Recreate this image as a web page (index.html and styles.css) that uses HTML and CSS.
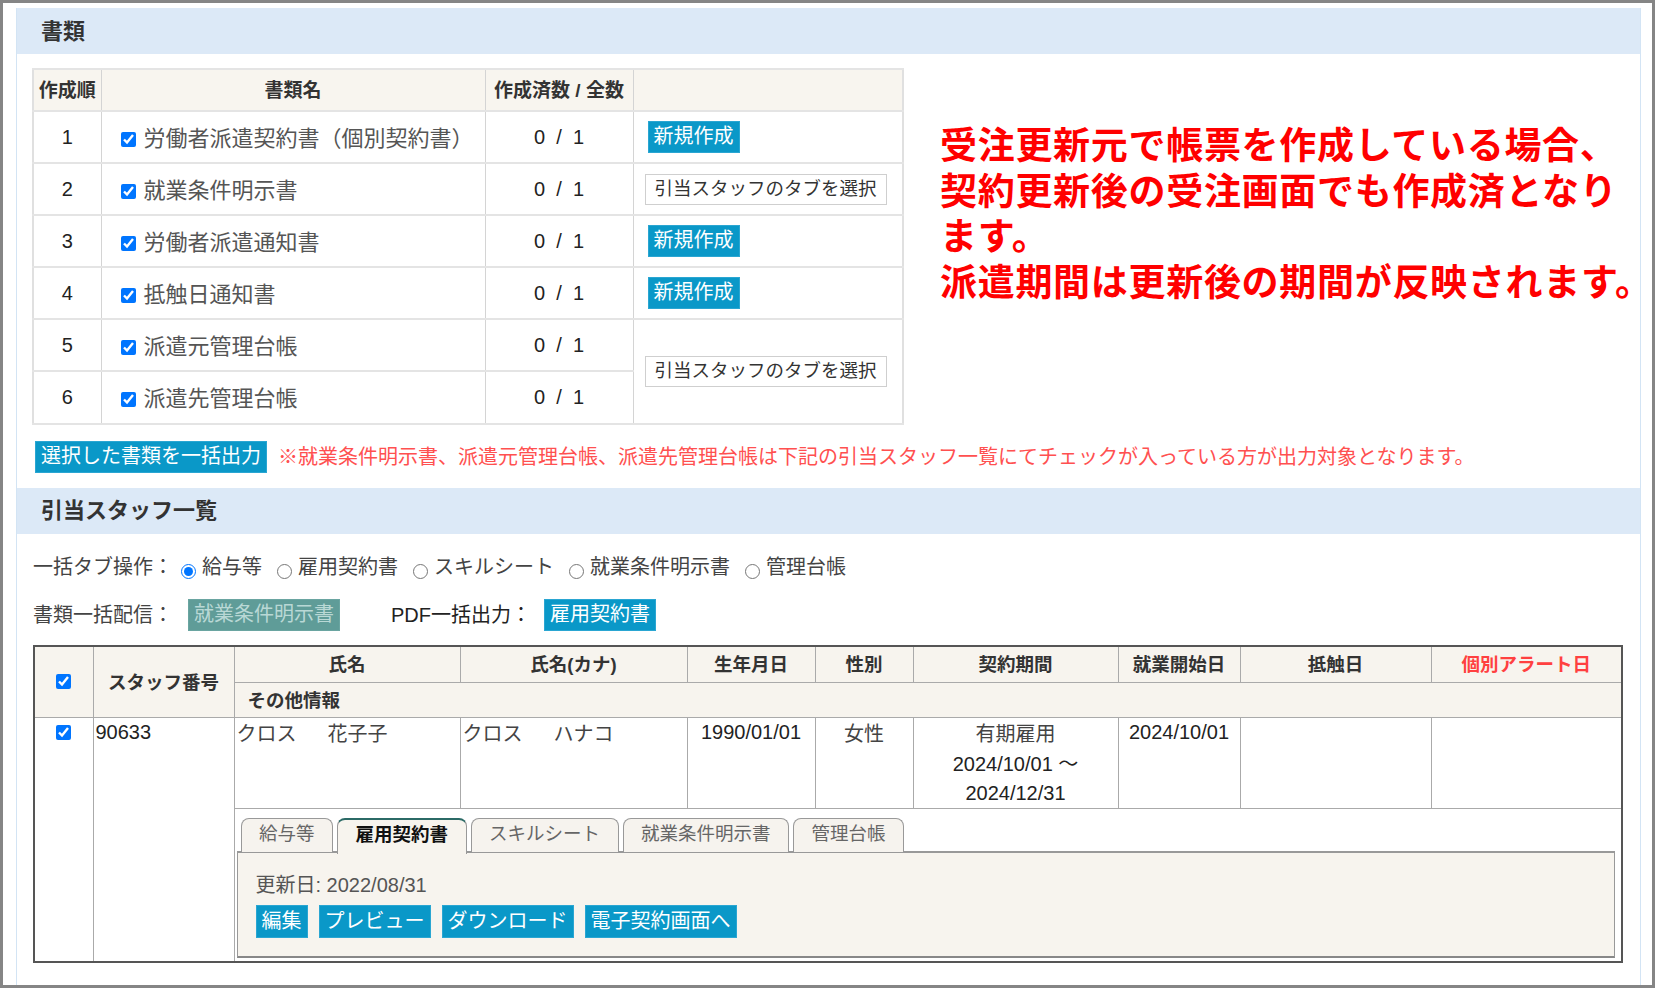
FILE: index.html
```html
<!DOCTYPE html>
<html lang="ja">
<head>
<meta charset="utf-8">
<title>書類 / 引当スタッフ一覧</title>
<link rel="stylesheet" href="styles.css">
</head>
<body>
<div class="frame">
  <div class="panel">
    <div class="band">書類</div>

    <div class="docs">
      <table class="doc-table">
        <colgroup>
          <col class="c-order"><col class="c-name"><col class="c-count"><col class="c-act">
        </colgroup>
        <thead>
          <tr><th>作成順</th><th>書類名</th><th>作成済数 / 全数</th><th></th></tr>
        </thead>
        <tbody>
          <tr>
            <td class="num">1</td>
            <td class="doc"><input type="checkbox" checked>労働者派遣契約書（個別契約書）</td>
            <td class="num">0 &nbsp;/ &nbsp;1</td>
            <td class="act"><span class="btn btn-new">新規作成</span></td>
          </tr>
          <tr>
            <td class="num">2</td>
            <td class="doc"><input type="checkbox" checked>就業条件明示書</td>
            <td class="num">0 &nbsp;/ &nbsp;1</td>
            <td class="act"><span class="btn-plain">引当スタッフのタブを選択</span></td>
          </tr>
          <tr>
            <td class="num">3</td>
            <td class="doc"><input type="checkbox" checked>労働者派遣通知書</td>
            <td class="num">0 &nbsp;/ &nbsp;1</td>
            <td class="act"><span class="btn btn-new">新規作成</span></td>
          </tr>
          <tr>
            <td class="num">4</td>
            <td class="doc"><input type="checkbox" checked>抵触日通知書</td>
            <td class="num">0 &nbsp;/ &nbsp;1</td>
            <td class="act"><span class="btn btn-new">新規作成</span></td>
          </tr>
          <tr>
            <td class="num">5</td>
            <td class="doc"><input type="checkbox" checked>派遣元管理台帳</td>
            <td class="num">0 &nbsp;/ &nbsp;1</td>
            <td class="act" rowspan="2"><span class="btn-plain">引当スタッフのタブを選択</span></td>
          </tr>
          <tr>
            <td class="num">6</td>
            <td class="doc"><input type="checkbox" checked>派遣先管理台帳</td>
            <td class="num">0 &nbsp;/ &nbsp;1</td>
          </tr>
        </tbody>
      </table>

      <p class="note">受注更新元で帳票を作成している場合、<br>契約更新後の受注画面でも作成済となり<br>ます。<br>派遣期間は更新後の期間が反映されます。</p>
    </div>

    <div class="bulk">
      <span class="btn">選択した書類を一括出力</span>
      <span class="warn">※就業条件明示書、派遣元管理台帳、派遣先管理台帳は下記の引当スタッフ一覧にてチェックが入っている方が出力対象となります。</span>
    </div>

    <div class="band">引当スタッフ一覧</div>

    <div class="opt-row">
      <span class="lbl">一括タブ操作：</span><label class="opt"><input type="radio" name="tab" checked>給与等</label><label class="opt"><input type="radio" name="tab">雇用契約書</label><label class="opt"><input type="radio" name="tab">スキルシート</label><label class="opt"><input type="radio" name="tab">就業条件明示書</label><label class="opt"><input type="radio" name="tab">管理台帳</label>
    </div>

    <div class="dist-row">
      <span class="lbl">書類一括配信：</span><span class="btn btn-off">就業条件明示書</span><span class="pdf">PDF一括出力：</span><span class="btn">雇用契約書</span>
    </div>

    <table class="staff">
      <colgroup>
        <col class="s1"><col class="s2"><col class="s3"><col class="s4"><col class="s5">
        <col class="s6"><col class="s7"><col class="s8"><col class="s9"><col class="s10">
      </colgroup>
      <thead>
        <tr class="h1">
          <th rowspan="2"><input type="checkbox" checked></th>
          <th rowspan="2">スタッフ番号</th>
          <th>氏名</th>
          <th>氏名(カナ)</th>
          <th>生年月日</th>
          <th>性別</th>
          <th>契約期間</th>
          <th>就業開始日</th>
          <th>抵触日</th>
          <th class="alert">個別アラート日</th>
        </tr>
        <tr class="h2">
          <th colspan="8" class="other">その他情報</th>
        </tr>
      </thead>
      <tbody>
        <tr class="data">
          <td rowspan="2" class="chk"><input type="checkbox" checked></td>
          <td rowspan="2" class="no">90633</td>
          <td>クロス　&nbsp;&nbsp;花子子</td>
          <td>クロス　&nbsp;&nbsp;ハナコ</td>
          <td class="center digits">1990/01/01</td>
          <td class="center">女性</td>
          <td class="center term"><div class="kind">有期雇用</div>2024/10/01 ～<br>2024/12/31</td>
          <td class="center digits">2024/10/01</td>
          <td></td>
          <td></td>
        </tr>
        <tr class="tabrow">
          <td colspan="8" class="tabcell">
            <div class="tabs">
              <span class="tab">給与等</span>
              <span class="tab active">雇用契約書</span>
              <span class="tab">スキルシート</span>
              <span class="tab">就業条件明示書</span>
              <span class="tab">管理台帳</span>
            </div>
            <div class="tab-panel">
              <div class="updated">更新日: 2022/08/31</div>
              <div class="actions">
                <span class="btn">編集</span><span class="btn">プレビュー</span><span class="btn">ダウンロード</span><span class="btn">電子契約画面へ</span>
              </div>
            </div>
          </td>
        </tr>
      </tbody>
    </table>
  </div>
</div>
</body>
</html>
```

FILE: styles.css
```css
* { box-sizing: border-box; }

body {
  margin: 0;
  background: #fff;
  color: #444;
  font-family: "Liberation Sans", "Noto Sans CJK JP", sans-serif;
  font-size: 20px;
}

/* outer window frame */
.frame {
  width: 1655px;
  height: 988px;
  border: 3px solid #858585;
  overflow: hidden;
}

.panel {
  margin: 5px 11px 0 13px;
  height: 1000px;
  border-left: 1px solid #d3e4f4;
  border-right: 1px solid #d3e4f4;
}

/* section heading bar */
.band {
  height: 46px;
  display: flex;
  align-items: center;
  padding: 0 0 5px 24px;
  background: #dce9f7;
  color: #333;
  font-size: 22px;
  font-weight: bold;
}

/* ---------- document list ---------- */
.docs {
  display: flex;
  align-items: flex-start;
  padding: 14px 0 0 15px;
}

.doc-table {
  flex: none;
  width: 870px;
  table-layout: fixed;
  border-collapse: collapse;
  border: 2px solid #e0e0e0;
}

.c-order { width: 68px; }
.c-name { width: 384px; }
.c-count { width: 148px; }
.c-act { width: 270px; }

.doc-table th,
.doc-table td {
  border-top: 2px solid #e4e4e4;
  border-bottom: 2px solid #e4e4e4;
  border-left: 1px solid #d4d4d4;
  border-right: 1px solid #d4d4d4;
  padding: 0;
}

.doc-table thead tr { height: 42px; }
.doc-table tbody tr { height: 52.1px; }

.doc-table th {
  background: #f8f5ef;
  color: #333;
  font-size: 19px;
  font-weight: bold;
  text-align: center;
  padding-bottom: 3px;
}

.doc-table .num {
  text-align: center;
  color: #222;
  font-size: 20px;
}

.doc-table .doc {
  padding: 0 0 3px 19px;
  font-size: 22px;
  color: #555;
  white-space: nowrap;
}

.doc-table input[type="checkbox"],
.staff input[type="checkbox"] {
  width: 15px;
  height: 15px;
  margin: 0 8px 0 0;
  vertical-align: -1px;
  accent-color: #0075ff;
}

.doc-table .act { padding-left: 11px; }

.btn {
  display: inline-block;
  height: 32px;
  padding: 0 5px 2px;
  line-height: 29px;
  font-size: 20px;
  color: #fff;
  background: #0a98c8;
  border: 1px solid #2aa6d2;
  white-space: nowrap;
}

.btn-new { margin-left: 3px; }

.btn-plain {
  display: inline-block;
  height: 31px;
  padding: 0 9px;
  line-height: 27px;
  font-size: 18.5px;
  color: #333;
  background: #fff;
  border: 1px solid #cfcfcf;
  white-space: nowrap;
}

.note {
  flex: none;
  margin: 56px 0 0 36px;
  color: #ff0000;
  font-size: 37px;
  font-weight: bold;
  line-height: 45.5px;
  letter-spacing: 0.7px;
  white-space: nowrap;
}

/* bulk output row */
.bulk {
  display: flex;
  align-items: center;
  padding: 16px 0 15px 18px;
}

.warn {
  margin: 0 0 3px 11px;
  color: #ff5050;
  font-size: 20px;
  white-space: nowrap;
}

/* ---------- staff list ---------- */
.opt-row {
  margin-top: 20px;
  padding-left: 16px;
  height: 30px;
  line-height: 27px;
  white-space: nowrap;
}

.lbl { color: #444; }

.opt { margin-right: 7px; color: #444; }

.opt input[type="radio"] {
  width: 15px;
  height: 15px;
  margin: 0 6px 0 8px;
  vertical-align: -5px;
  accent-color: #0075ff;
}

.dist-row {
  margin-top: 15px;
  padding-left: 16px;
  height: 32px;
  display: flex;
  align-items: center;
  white-space: nowrap;
}

.dist-row .lbl,
.dist-row .pdf { padding-bottom: 3px; }

.dist-row .btn { margin-left: 15px; }

.btn-off {
  background: #5f9c98;
  border-color: #6aa5a1;
  color: #b9d8d5;
}

.pdf {
  margin-left: 51px;
  color: #222;
}

.dist-row .pdf + .btn { margin-left: 13px; }

.staff {
  margin: 14px 0 0 16px;
  width: 1588px;
  table-layout: fixed;
  border-collapse: collapse;
  border: 2px solid #555;
}

.s1 { width: 59px; }
.s2 { width: 141px; }
.s3 { width: 226px; }
.s4 { width: 227px; }
.s5 { width: 128px; }
.s6 { width: 98px; }
.s7 { width: 205px; }
.s8 { width: 122px; }
.s9 { width: 191px; }
.s10 { width: 191px; }

.staff th,
.staff td {
  border: 1px solid #aaa;
  padding: 0;
}

.staff th {
  background: #f7f4ee;
  color: #333;
  font-size: 18.5px;
  font-weight: bold;
  text-align: center;
  padding-bottom: 2px;
}

.staff th input[type="checkbox"] { margin: 0; vertical-align: middle; }

.staff .h1 { height: 37px; }
.staff .h2 { height: 35px; }

.staff th.other {
  text-align: left;
  padding-left: 13px;
}

.staff th.alert { color: #ff4040; }

.staff .data { height: 89.5px; }

.staff .data td {
  vertical-align: top;
  padding: 2px 2px 0;
  line-height: 29px;
  font-size: 20px;
  color: #444;
  white-space: nowrap;
}

.staff .data td.chk {
  text-align: center;
  line-height: 0;
  padding-top: 7px;
}

.staff td.chk input[type="checkbox"] { margin: 0; vertical-align: top; }

.staff .data td.no { color: #222; padding-top: 0; }

.staff .data td.digits { color: #222; padding-top: 0; }

.staff .center { text-align: center; }

/* contract period: type on its own taller line, then the date range */
.staff .data td.term { line-height: 29px; padding-top: 0; color: #222; }
.staff .data td.term .kind { line-height: 32px; color: #444; }

/* document tabs inside the staff row */
.staff .tabcell {
  vertical-align: top;
  padding: 9px 6px 3px 2px;
  background: #fff;
}

.tabs {
  display: flex;
  gap: 4px;
  padding-left: 4px;
  position: relative;
  z-index: 1;
}

.tab {
  height: 34px;
  margin-bottom: -1px;
  padding: 0 17.5px;
  line-height: 30px;
  font-size: 18.5px;
  color: #666;
  background: #f6f3ee;
  border: 1px solid #999;
  border-bottom: none;
  border-radius: 8px 8px 0 0;
  white-space: nowrap;
}

.tab.active {
  height: 36px;
  margin-bottom: -3px;
  color: #111;
  font-weight: bold;
  background: #f7f4ee;
  border-top: 2px solid #2b6a66;
}

.tab-panel {
  height: 107px;
  padding: 18px 18px 0;
  background: #f7f4ee;
  border: 1px solid #999;
  border-top: 2px solid #999;
  border-bottom: 2px solid #888;
}

.updated {
  line-height: 28px;
  font-size: 20px;
  color: #555;
}

.actions {
  margin-top: 6px;
  display: flex;
}

.actions .btn {
  height: 33px;
  line-height: 30px;
  margin-right: 11px;
}
```
